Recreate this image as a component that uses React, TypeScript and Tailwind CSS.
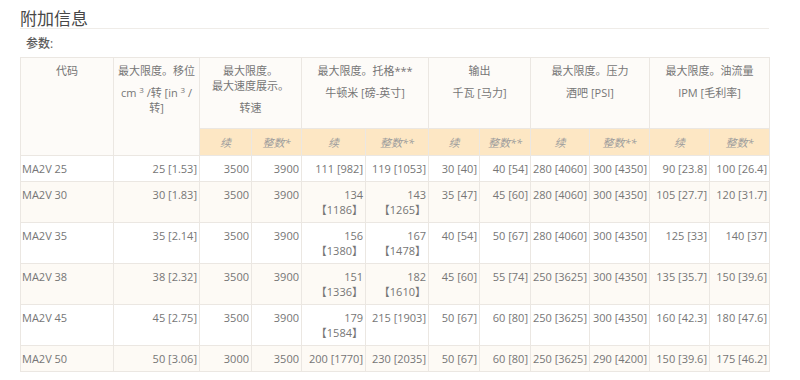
const font = { fontFamily: '"Open Sans", "Noto Sans CJK SC", sans-serif' };

type Cell = string | string[];

const rows: { code: string; cells: Cell[] }[] = [
  {
    code: 'MA2V 25',
    cells: ['25 [1.53]', '3500', '3900', '111 [982]', '119 [1053]', '30 [40]', '40 [54]', '280 [4060]', '300 [4350]', '90 [23.8]', '100 [26.4]'],
  },
  {
    code: 'MA2V 30',
    cells: ['30 [1.83]', '3500', '3900', ['134', '【1186】'], ['143', '【1265】'], '35 [47]', '45 [60]', '280 [4060]', '300 [4350]', '105 [27.7]', '120 [31.7]'],
  },
  {
    code: 'MA2V 35',
    cells: ['35 [2.14]', '3500', '3900', ['156', '【1380】'], ['167', '【1478】'], '40 [54]', '50 [67]', '280 [4060]', '300 [4350]', '125 [33]', '140 [37]'],
  },
  {
    code: 'MA2V 38',
    cells: ['38 [2.32]', '3500', '3900', ['151', '【1336】'], ['182', '【1610】'], '45 [60]', '55 [74]', '250 [3625]', '300 [4350]', '135 [35.7]', '150 [39.6]'],
  },
  {
    code: 'MA2V 45',
    cells: ['45 [2.75]', '3500', '3900', ['179', '【1584】'], '215 [1903]', '50 [67]', '60 [80]', '250 [3625]', '300 [4350]', '160 [42.3]', '180 [47.6]'],
  },
  {
    code: 'MA2V 50',
    cells: ['50 [3.06]', '3000', '3500', '200 [1770]', '230 [2035]', '50 [67]', '60 [80]', '250 [3625]', '290 [4200]', '150 [39.6]', '175 [46.2]'],
  },
];

const widths = [93, 86, 52, 50, 64, 63, 51, 51, 59, 60, 60, 60];

const groups = [
  { top: ['最大限度。', '最大速度展示。'], unit: '转速', sub: ['续', '整数*'] },
  { top: ['最大限度。托格***'], unit: '牛顿米 [磅-英寸]', sub: ['续', '整数**'] },
  { top: ['输出'], unit: '千瓦 [马力]', sub: ['续', '整数**'] },
  { top: ['最大限度。压力'], unit: '酒吧 [PSI]', sub: ['续', '整数**'] },
  { top: ['最大限度。油流量'], unit: 'IPM [毛利率]', sub: ['续', '整数*'] },
];

const th = 'border border-[#ebe7e2] px-1 pt-[5px] align-top text-center font-normal';

export default function App() {
  return (
    <div className="min-h-[380px] bg-white pl-5 pr-[31px] text-[#767676]" style={font}>
      <h2 className="border-b border-[#efece8] pt-[9px] text-[17px] leading-[19px] font-normal text-[#484848]">
        附加信息
      </h2>
      <p className="mt-[7px] pl-[6px] text-[12px] leading-[16px] font-medium text-[#5c5c5c]">参数:</p>

      <table className="mt-[5px] w-[750px] table-fixed border-collapse text-[11px] leading-[15px]">
        <colgroup>
          {widths.map((w, i) => (
            <col key={i} style={{ width: w }} />
          ))}
        </colgroup>
        <thead className="bg-[#fdfbf8]">
          <tr className="h-[71px]">
            <th rowSpan={2} className={th}>
              代码
            </th>
            <th rowSpan={2} className={th}>
              <p>最大限度。移位</p>
              <p className="mt-[7px] whitespace-nowrap">
                cm <sup className="text-[8px]">3</sup> /转 [in <sup className="text-[8px]">3</sup> /
              </p>
              <p>转]</p>
            </th>
            {groups.map((g, i) => (
              <th key={i} colSpan={2} className={th}>
                {g.top.map((t) => (
                  <p key={t}>{t}</p>
                ))}
                <p className="mt-[7px]">{g.unit}</p>
              </th>
            ))}
          </tr>
          <tr className="h-[27px] bg-[#fde7c4]">
            {groups.flatMap((g, i) =>
              g.sub.map((s, j) => (
                <th key={`${i}-${j}`} className="border border-[#ebe7e2] px-1 text-center font-normal italic text-[#9c9c9c]">
                  {s}
                </th>
              )),
            )}
          </tr>
        </thead>
        <tbody>
          {rows.map((r, ri) => (
            <tr key={r.code} className={ri % 2 === 1 ? 'bg-[#fdfaf5]' : 'bg-white'}>
              <td className="border border-[#ebe7e2] py-[5px] pl-[1px] align-top whitespace-nowrap">{r.code}</td>
              {r.cells.map((c, ci) => (
                <td key={ci} className="border border-[#ebe7e2] py-[5px] pr-[2px] align-top text-right whitespace-nowrap">
                  {Array.isArray(c) ? c.map((line) => <span key={line} className="block">{line}</span>) : c}
                </td>
              ))}
            </tr>
          ))}
        </tbody>
      </table>
    </div>
  );
}
